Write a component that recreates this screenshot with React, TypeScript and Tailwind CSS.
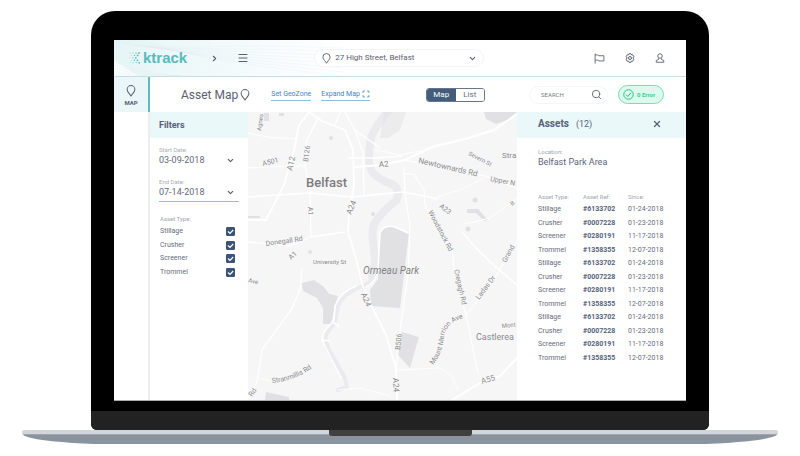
import { useState } from "react";
import { ChevronDown, ChevronRight, Menu, Scan, Search, X } from "lucide-react";

const assetTypes = ["Stillage", "Crusher", "Screener", "Trommel"];

const batch = [
  { type: "Stillage", ref: "#6133702", since: "01-24-2018" },
  { type: "Crusher", ref: "#0007228", since: "01-23-2018" },
  { type: "Screener", ref: "#0280191", since: "11-17-2018" },
  { type: "Trommel", ref: "#1358355", since: "12-07-2018" },
];
const assets = [...batch, ...batch, ...batch];

function Pin({ className }: { className: string }) {
  return (
    <svg viewBox="0 0 16 20" fill="none" stroke="currentColor" strokeWidth="1.700" className={className} aria-hidden="true">
      <path d="M8 18.500C7 15.500 1.500 12 1.500 7.500a6.500 6.500 0 0 1 13 0C14.500 12 9 15.500 8 18.500Z" strokeLinejoin="round" />
    </svg>
  );
}

const logoDots = [
  [1, 1, 0.4], [4, 0.8, 0.5], [7, 1.2, 0.7], [10, 1, 0.9],
  [2.5, 3.2, 0.4], [5.5, 3.4, 0.7], [8.6, 3.4, 0.9],
  [0.8, 5.6, 0.4], [3.8, 5.8, 0.6], [6.8, 5.8, 0.9],
  [2.3, 8.2, 0.4], [5.4, 8.2, 0.7], [8.5, 8.3, 0.9],
  [1, 10.6, 0.4], [4, 10.8, 0.5], [7.2, 10.6, 0.7], [10.2, 10.8, 0.9],
];

function Logo() {
  return (
    <a href="#home" className="flex items-center gap-[2px] text-[#58bcbb]">
      <svg viewBox="0 0 12 12" className="size-[12px]" fill="currentColor" aria-hidden="true">
        {logoDots.map(([x, y, r]) => (
          <circle key={`${x}-${y}`} cx={x} cy={y} r={r} />
        ))}
      </svg>
      <span className="font-['Liberation_Sans',sans-serif] text-[15px] leading-[18px] font-bold">ktrack</span>
    </a>
  );
}

function HeaderWaves() {
  return (
    <svg
      viewBox="0 0 240 36"
      preserveAspectRatio="none"
      className="absolute inset-y-0 left-0 h-full w-2/5"
      fill="none"
      stroke="#dfecf0"
      strokeWidth="0.500"
      aria-hidden="true"
    >
      <path d="M0 20 L26 36 L0 36Z" fill="#ffffff" stroke="none" opacity="0.700" />
      {[0, 1, 2, 3, 4, 5, 6, 7].map((i) => (
        <path key={i} opacity={0.5} d={`M${i * 5} 0 C${30 + i * 5} 14 ${90 + i * 4} ${2 + i * 3} 240 ${8 + i * 4}`} />
      ))}
      {[0, 1, 2, 3, 4].map((i) => (
        <path key={i} opacity={0.5} d={`M0 ${22 + i * 3} C20 ${28 + i * 3} 40 ${34 + i} 70 36`} />
      ))}
    </svg>
  );
}

function Header() {
  return (
    <header className="relative flex h-[37px] items-center border-b border-[#c5dfe8] bg-linear-to-r from-[#e6f5f7] via-white via-40% to-white pr-[21px] pl-[15px] text-[#5b6072]">
      <HeaderWaves />
      <div className="relative flex w-full items-center">
        <Logo />
        <button aria-label="Forward" className="ml-[23px]">
          <ChevronRight className="size-[9px]" strokeWidth={3} />
        </button>
        <button aria-label="Menu" className="ml-[18px]">
          <Menu className="size-[12px]" />
        </button>
        <div className="relative ml-[65px] flex h-[18px] w-[170px] items-center rounded-full border border-[#f3f4f6] bg-white">
          <Pin className="absolute left-[7px] h-[11px] w-[9px]" />
          <select
            aria-label="Address"
            className="h-full w-full appearance-none bg-transparent pl-[20px] text-[8px] leading-[16px] outline-none"
          >
            <option>27 High Street, Belfast</option>
          </select>
          <ChevronDown className="pointer-events-none absolute right-[6px] size-[9px]" strokeWidth={3} />
        </div>
        <div className="ml-auto flex items-center gap-[20px]">
          <button aria-label="Flag">
            <svg viewBox="0 0 20 20" className="size-[11px]" fill="none" stroke="currentColor" strokeWidth="1.600">
              <path d="M2 1v18M2 3.500h5l1.500 1.500H18v9.500H9L7 13H2" strokeLinejoin="round" />
            </svg>
          </button>
          <button aria-label="Settings">
            <svg viewBox="0 0 20 20" className="size-[10px]" fill="none" stroke="currentColor" strokeWidth="2">
              <path d="M8 1.500h4l1 2.300 2.500-.300 2 3.400L16 10l1.500 3.100-2 3.400-2.500-.300-1 2.300H8l-1-2.300-2.500.300-2-3.400L4 10 2.500 6.900l2-3.400 2.500.300Z" strokeLinejoin="round" />
              <circle cx="10" cy="10" r="3" />
            </svg>
          </button>
          <button aria-label="Account">
            <svg viewBox="0 0 20 20" className="size-[10px]" fill="none" stroke="currentColor" strokeWidth="1.800">
              <circle cx="10" cy="6" r="4.500" />
              <path d="M7 10.500v2.500L2.500 15v3.500h15V15L13 13v-2.500" strokeLinejoin="round" />
            </svg>
          </button>
        </div>
      </div>
    </header>
  );
}

function Toolbar() {
  const [view, setView] = useState("Map");
  return (
    <div className="flex h-[35px] items-center bg-white pr-[22px] pl-[31px]">
      <h1 className="text-[12px] leading-[16px] text-[#5a6072]">Asset Map</h1>
      <Pin className="ml-[2px] h-[12px] w-[10px] text-[#5a6072]" />
      <a href="#geozone" className="ml-[21px] border-b border-[#8dbce3] text-[7px] leading-[11px] text-[#3f86c6]">
        Set GeoZone
      </a>
      <a href="#expand" className="ml-[10px] flex items-center gap-[2px] border-b border-[#8dbce3] text-[7px] leading-[11px] text-[#3f86c6]">
        Expand Map
        <Scan className="size-[8px]" strokeWidth={3} />
      </a>
      <div className="ml-auto flex h-[14px] w-[59px] overflow-hidden rounded-[3px] border border-[#68758a] text-[8px] leading-[12px]">
        {["Map", "List"].map((name) => (
          <button
            key={name}
            onClick={() => setView(name)}
            aria-pressed={view === name}
            className={view === name ? "flex-1 bg-[#435c7c] text-white" : "flex-1 bg-white text-[#6b7181]"}
          >
            {name}
          </button>
        ))}
      </div>
      <div className="ml-[44px] flex h-[18px] w-[79px] items-center rounded-full border border-[#f5f6f7] pr-[5px] pl-[11px]">
        <input
          aria-label="Search"
          placeholder="SEARCH"
          className="w-full min-w-0 bg-transparent text-[6px] leading-[10px] outline-none placeholder:text-[#737f8d]"
        />
        <Search className="size-[11px] shrink-0 text-[#5e6475]" />
      </div>
      <button className="ml-[10px] flex h-[19px] w-[46px] items-center gap-[3px] rounded-full border border-[#77dfb4] bg-[#dcfaed] pl-[4px] text-[6px] leading-[8px] font-bold whitespace-nowrap text-[#51c796]">
        <svg viewBox="0 0 22 22" className="size-[11px] shrink-0" fill="none" stroke="#35bd82" strokeWidth="2">
          <circle cx="11" cy="11" r="9.500" />
          <path d="m6 11 3.500 4L16 7.500" />
        </svg>
        0 Error
      </button>
    </div>
  );
}

function DateField({ id, label, value, active }: { id: string; label: string; value: string; active?: boolean }) {
  return (
    <div className={active ? "border-b border-[#82c9cd] pb-[3px]" : "border-b border-transparent pb-[3px]"}>
      <label htmlFor={id} className="block text-[6px] leading-[8px] text-[#a9aeb7]">
        {label}
      </label>
      <div className="relative flex items-center">
        <select id={id} className="w-full appearance-none bg-transparent text-[9px] leading-[12px] text-[#636878] outline-none">
          <option>{value}</option>
        </select>
        <ChevronDown className="pointer-events-none absolute right-[4px] size-[9px] text-[#555b6c]" strokeWidth={3} />
      </div>
    </div>
  );
}

function Filters() {
  return (
    <aside className="w-[98px] shrink-0 bg-white">
      <h2 className="bg-[#ebf8fa] px-[9px] py-[6px] text-[9px] leading-[14px] font-bold text-[#56607a]">Filters</h2>
      <div className="flex flex-col gap-[8px] px-[9px] pt-[8px]">
        <DateField id="start" label="Start Date:" value="03-09-2018" />
        <DateField id="end" label="End Date:" value="07-14-2018" active />
      </div>
      <div role="group" aria-labelledby="asset-type" className="pt-[13px] pr-[13px] pl-[10px]">
        <p id="asset-type" className="text-[6px] leading-[8px] text-[#a0a6b0]">Asset Type:</p>
        <div className="mt-[2px] grid h-[54px] grid-rows-4">
          {assetTypes.map((name) => (
            <label key={name} className="flex items-center justify-between text-[7px] leading-[9px] text-[#666c7b]">
              {name}
              <span className="relative flex">
                <input type="checkbox" defaultChecked className="peer size-[9px] appearance-none rounded-[1px] border border-[#3c5577] checked:bg-[#3c5577]" />
                <svg viewBox="0 0 9 9" className="pointer-events-none absolute inset-0 hidden peer-checked:block" fill="none" stroke="white" strokeWidth="1.200">
                  <path d="m2 4.500 2 2L7.200 3" />
                </svg>
              </span>
            </label>
          ))}
        </div>
      </div>
    </aside>
  );
}

const roads = [
  { d: "M309 112 L299 125 L294 150 L284 185 L266 220 L248 220", w: 1.8 },
  { d: "M309 112 L322 121 L345 130 L353 150 L354 185 L349 215 L348 232 L357 262 L362 284 L371 305 L386 335 L396 368 L397 400", w: 1.8 },
  { d: "M318 118 L306 142 L305 165 L310 190 L311 237", w: 1.3 },
  { d: "M248 133 L268 137 L296 139", w: 1.2 },
  { d: "M248 168 L290 166 L305 166", w: 1 },
  { d: "M248 197 L310 193 L352 197 L402 192 L425 196 L437 199", w: 1.5 },
  { d: "M311 237 L345 232 M248 242 L290 246 L311 237 M302 270 L300 290 L291 310 L278 328 L262 350 L257 382 L248 398", w: 1.3 },
  { d: "M257 378 L275 382", w: 0.8 },
  { d: "M355 167 L380 165 L405 160 L432 147 L465 139 L494 130 L517 114", w: 2 },
  { d: "M348 158 L375 158 L402 156 M363 150 L364 195", w: 1.3 },
  { d: "M376 150 L400 155 L420 151", w: 1.1 },
  { d: "M405 160 L450 170 L485 176 L517 188", w: 1.2 },
  { d: "M404 168 L405 195 L410 225 L408 275 L400 330 L396 370", w: 1.3 },
  { d: "M405 174 L414 174 L424 190 L425 205 L437 230 L452 247 L455 275 L466 315 L478 374", w: 1.1 },
  { d: "M437 197 L460 190 L486 177", w: 1 },
  { d: "M462 232 L478 250 L497 268 L517 285", w: 1.4 },
  { d: "M465 224 L490 218 L517 198", w: 1 },
  { d: "M466 315 L478 300 L495 278 L517 240", w: 1.1 },
  { d: "M397 370 L440 368 L452 376 L458 390", w: 0.9 },
  { d: "M452 400 L480 383 L500 376 L517 358", w: 2 },
  { d: "M345 112 L355 130 L380 148 M340 112 L335 125 M355 130 L362 150", w: 1.3 },
  { d: "M338 390 L360 388 L390 396", w: 0.8 },
];

const labels = [
  { t: "A501", x: 263, y: 166, r: -14, s: 7 },
  { t: "A12", x: 292, y: 171, r: -76, s: 8 },
  { t: "B126", x: 308, y: 162, r: -83, s: 7 },
  { t: "A1", x: 308, y: 207, r: 88, s: 7 },
  { t: "A24", x: 351, y: 215, r: -68, s: 8 },
  { t: "A2", x: 379, y: 167, r: -4, s: 8 },
  { t: "Donegall Rd", x: 266, y: 246, r: -8, s: 7 },
  { t: "A1", x: 291, y: 260, r: -42, s: 7 },
  { t: "University St", x: 313, y: 264, r: 0, s: 6 },
  { t: "Ave", x: 248, y: 282, r: 14, s: 6 },
  { t: "A24", x: 361, y: 294, r: 68, s: 8 },
  { t: "Newtownards Rd", x: 418, y: 163, r: 13, s: 8 },
  { t: "Severn St", x: 468, y: 155, r: 27, s: 6 },
  { t: "Upper N", x: 490, y: 181, r: 11, s: 7 },
  { t: "A23", x: 439, y: 207, r: 38, s: 7 },
  { t: "Woodstock Rd", x: 428, y: 212, r: 62, s: 7 },
  { t: "Cregagh Rd", x: 454, y: 270, r: 77, s: 7 },
  { t: "Ladas Dr", x: 479, y: 300, r: -53, s: 7 },
  { t: "Grand", x: 506, y: 263, r: -62, s: 7 },
  { t: "B", x: 512, y: 206, r: -35, s: 6 },
  { t: "B506", x: 400, y: 350, r: -84, s: 7 },
  { t: "A24", x: 393, y: 378, r: 87, s: 8 },
  { t: "A55", x: 482, y: 384, r: -17, s: 8 },
  { t: "Mont", x: 502, y: 328, r: -6, s: 6 },
  { t: "Agnes", x: 261, y: 131, r: -82, s: 6 },
  { t: "Rd", x: 252, y: 397, r: -55, s: 7 },
];

function CityMap() {
  return (
    <svg
      viewBox="248 112 269 288"
      preserveAspectRatio="xMidYMid slice"
      className="h-full min-h-[288px] w-full font-[Roboto,sans-serif]"
      role="img"
      aria-label="Street map of Belfast"
    >
      <rect x="0" y="0" width="800" height="456" fill="#f6f6f7" />
      <g fill="none" stroke="#ebebed" strokeLinejoin="round" strokeLinecap="round">
        <path d="M388 112 Q376 124 371 138 Q366 166 374 174 Q382 181 394 185 Q401 192 396 201 Q386 208 378 218 Q371 226 373 240 L375 262 L372 276" strokeWidth="8" />
        <path d="M372 278 Q368 286 360 287 Q343 294 338 306 L335 322 L325 336 L328 348 L345 378 L347 387 L338 390" strokeWidth="4" />
      </g>
      <g fill="#e1e1e3">
        <path d="M380 232 Q386 224 395 227 L409 233 L400 308 L371 306 L370 290 L378 279 Z" />
        <path d="M302 283 L314 280 L324 287 L329 294 L338 296 L334 310 L331 324 L323 324 L323 308 L317 298 L303 291 Z" />
        <path d="M266 392 L289 397 L289 400 L265 400 Z" />
        <path d="M402 332 L419 337 L410 368 L398 355 Z" />
        <path d="M484 112 L517 112 L508 120 L496 124 L486 119 Z" />
        <path d="M467 209 L478 209 L488 220 L484 221 L476 213 L467 213 Z" />
        <circle cx="475" cy="200" r="2.500" />
        <circle cx="468" cy="229" r="2.500" />
        <circle cx="331" cy="138" r="2" />
        <circle cx="310" cy="252" r="2" />
        <circle cx="373" cy="214" r="2" />
        <path d="M264 113h5v8h-5zM279 113h5v3h-5zM248 216h12v2h-12z" />
        <path d="M384 112 L406 112 L400 130 L388 138 L380 138Z" opacity="0.500" />
      </g>
      <g fill="none" stroke="#ffffff" strokeLinejoin="round" strokeLinecap="round">
        {roads.map((road) => (
          <path key={road.d} d={road.d} strokeWidth={road.w} />
        ))}
        <path d="M408 233 L395 227 Q384 224 380 233 L378 270 Q376 282 366 287 M356 286 Q340 292 335 306 L334 320 L324 332 L322 340 L341 378 M332 322 L339 326 M323 340 L330 341" strokeWidth="1.500" />
      </g>
      <g fill="#8b8b8e">
        {labels.map((l) => (
          <text key={`${l.t}-${l.x}`} transform={`translate(${l.x} ${l.y}) rotate(${l.r})`} fontSize={l.s}>
            {l.t}
          </text>
        ))}
        <path id="stranmillis" d="M272 383 Q296 381 315 366" fill="none" />
        <text fontSize="7">
          <textPath href="#stranmillis">Stranmillis Rd</textPath>
        </text>
        <path id="merrion" d="M433 365 Q443 353 444 336 Q447 322 464 318" fill="none" />
        <text fontSize="7">
          <textPath href="#merrion">Mount Merrion Ave</textPath>
        </text>
        <text x="502" y="158" fontSize="8">Stra</text>
        <text x="476" y="340" fontSize="9">Castlerea</text>
        <text x="363" y="274" fontSize="10" fontStyle="italic" fill="#828285">Ormeau Park</text>
        <text x="306" y="187" fontSize="13" fontWeight="500" fill="#7c7c7f">Belfast</text>
      </g>
    </svg>
  );
}

function AssetsPanel() {
  return (
    <section className="w-[169px] shrink-0 bg-white pb-[35px]">
      <div className="flex h-[26px] items-center bg-[#ebf8f9] pr-[24px] pb-[2px] pl-[21px] text-[#56607a]">
        <h2 className="text-[10px] leading-[12px] font-bold">Assets</h2>
        <span className="ml-[7px] text-[9px] leading-[12px]">(12)</span>
        <button aria-label="Close" className="ml-auto">
          <X className="size-[10px]" strokeWidth={3} />
        </button>
      </div>
      <div className="px-[21px]">
        <p className="pt-[9px] text-[6px] leading-[9px] text-[#a0a6b0]">Location:</p>
        <p className="text-[9px] leading-[12px] text-[#5b6479]">Belfast Park Area</p>
        <table className="mt-[22px] h-[175px] w-full table-fixed text-left text-[7px] leading-[9px] text-[#666c7b]">
          <thead>
            <tr className="text-[6px] text-[#a0a6b0]">
              <th className="h-[13px] w-[45px] p-0 font-normal">Asset Type:</th>
              <th className="h-[13px] w-[45px] p-0 font-normal">Asset Ref:</th>
              <th className="h-[13px] p-0 font-normal">Since:</th>
            </tr>
          </thead>
          <tbody>
            {assets.map((a, i) => (
              <tr key={i}>
                <td className="p-0">{a.type}</td>
                <td className="p-0 font-bold text-[#56627c]">{a.ref}</td>
                <td className="p-0">{a.since}</td>
              </tr>
            ))}
          </tbody>
        </table>
      </div>
    </section>
  );
}

function Sidebar() {
  return (
    <nav className="flex w-[36px] shrink-0 flex-col">
      <a
        href="#map"
        className="flex h-[35px] flex-col items-center gap-[2px] border-r-2 border-[#5dbcc0] bg-[#eaf6f8] pt-[8px] text-[#56607a]"
      >
        <Pin className="h-[12px] w-[10px]" />
        <span className="text-[6px] leading-[8px] font-bold">MAP</span>
      </a>
      <div className="flex-1 border-r-2 border-[#eceef0] bg-white" />
    </nav>
  );
}

export default function App() {
  return (
    <main className="min-h-screen bg-white px-[22px] pt-[11px] font-[Roboto,sans-serif]">
      <div className="mx-[69px] overflow-hidden rounded-t-[24px] rounded-b-[6px] bg-black">
        <div className="mx-[23px] mt-[29px] flex flex-col border-b border-[#a9acae] bg-white">
          <Header />
          <div className="flex">
            <Sidebar />
            <div className="flex min-w-0 flex-1 flex-col">
              <Toolbar />
              <div className="flex">
                <Filters />
                <div className="min-w-0 flex-1">
                  <CityMap />
                </div>
                <AssetsPanel />
              </div>
            </div>
          </div>
        </div>
        <div className="mt-[10px] h-[19px] bg-[#222223]" />
      </div>
      <div className="h-[14px] rounded-[3px_3px_90px_90px/2px_2px_11px_11px] bg-linear-to-b from-[#d0d6db] from-25% via-[#8b939c] via-35% to-[#8794a2]">
        <div className="mx-auto h-[6px] w-[143px] rounded-b-[3px] bg-[#413f40]" />
      </div>
    </main>
  );
}
